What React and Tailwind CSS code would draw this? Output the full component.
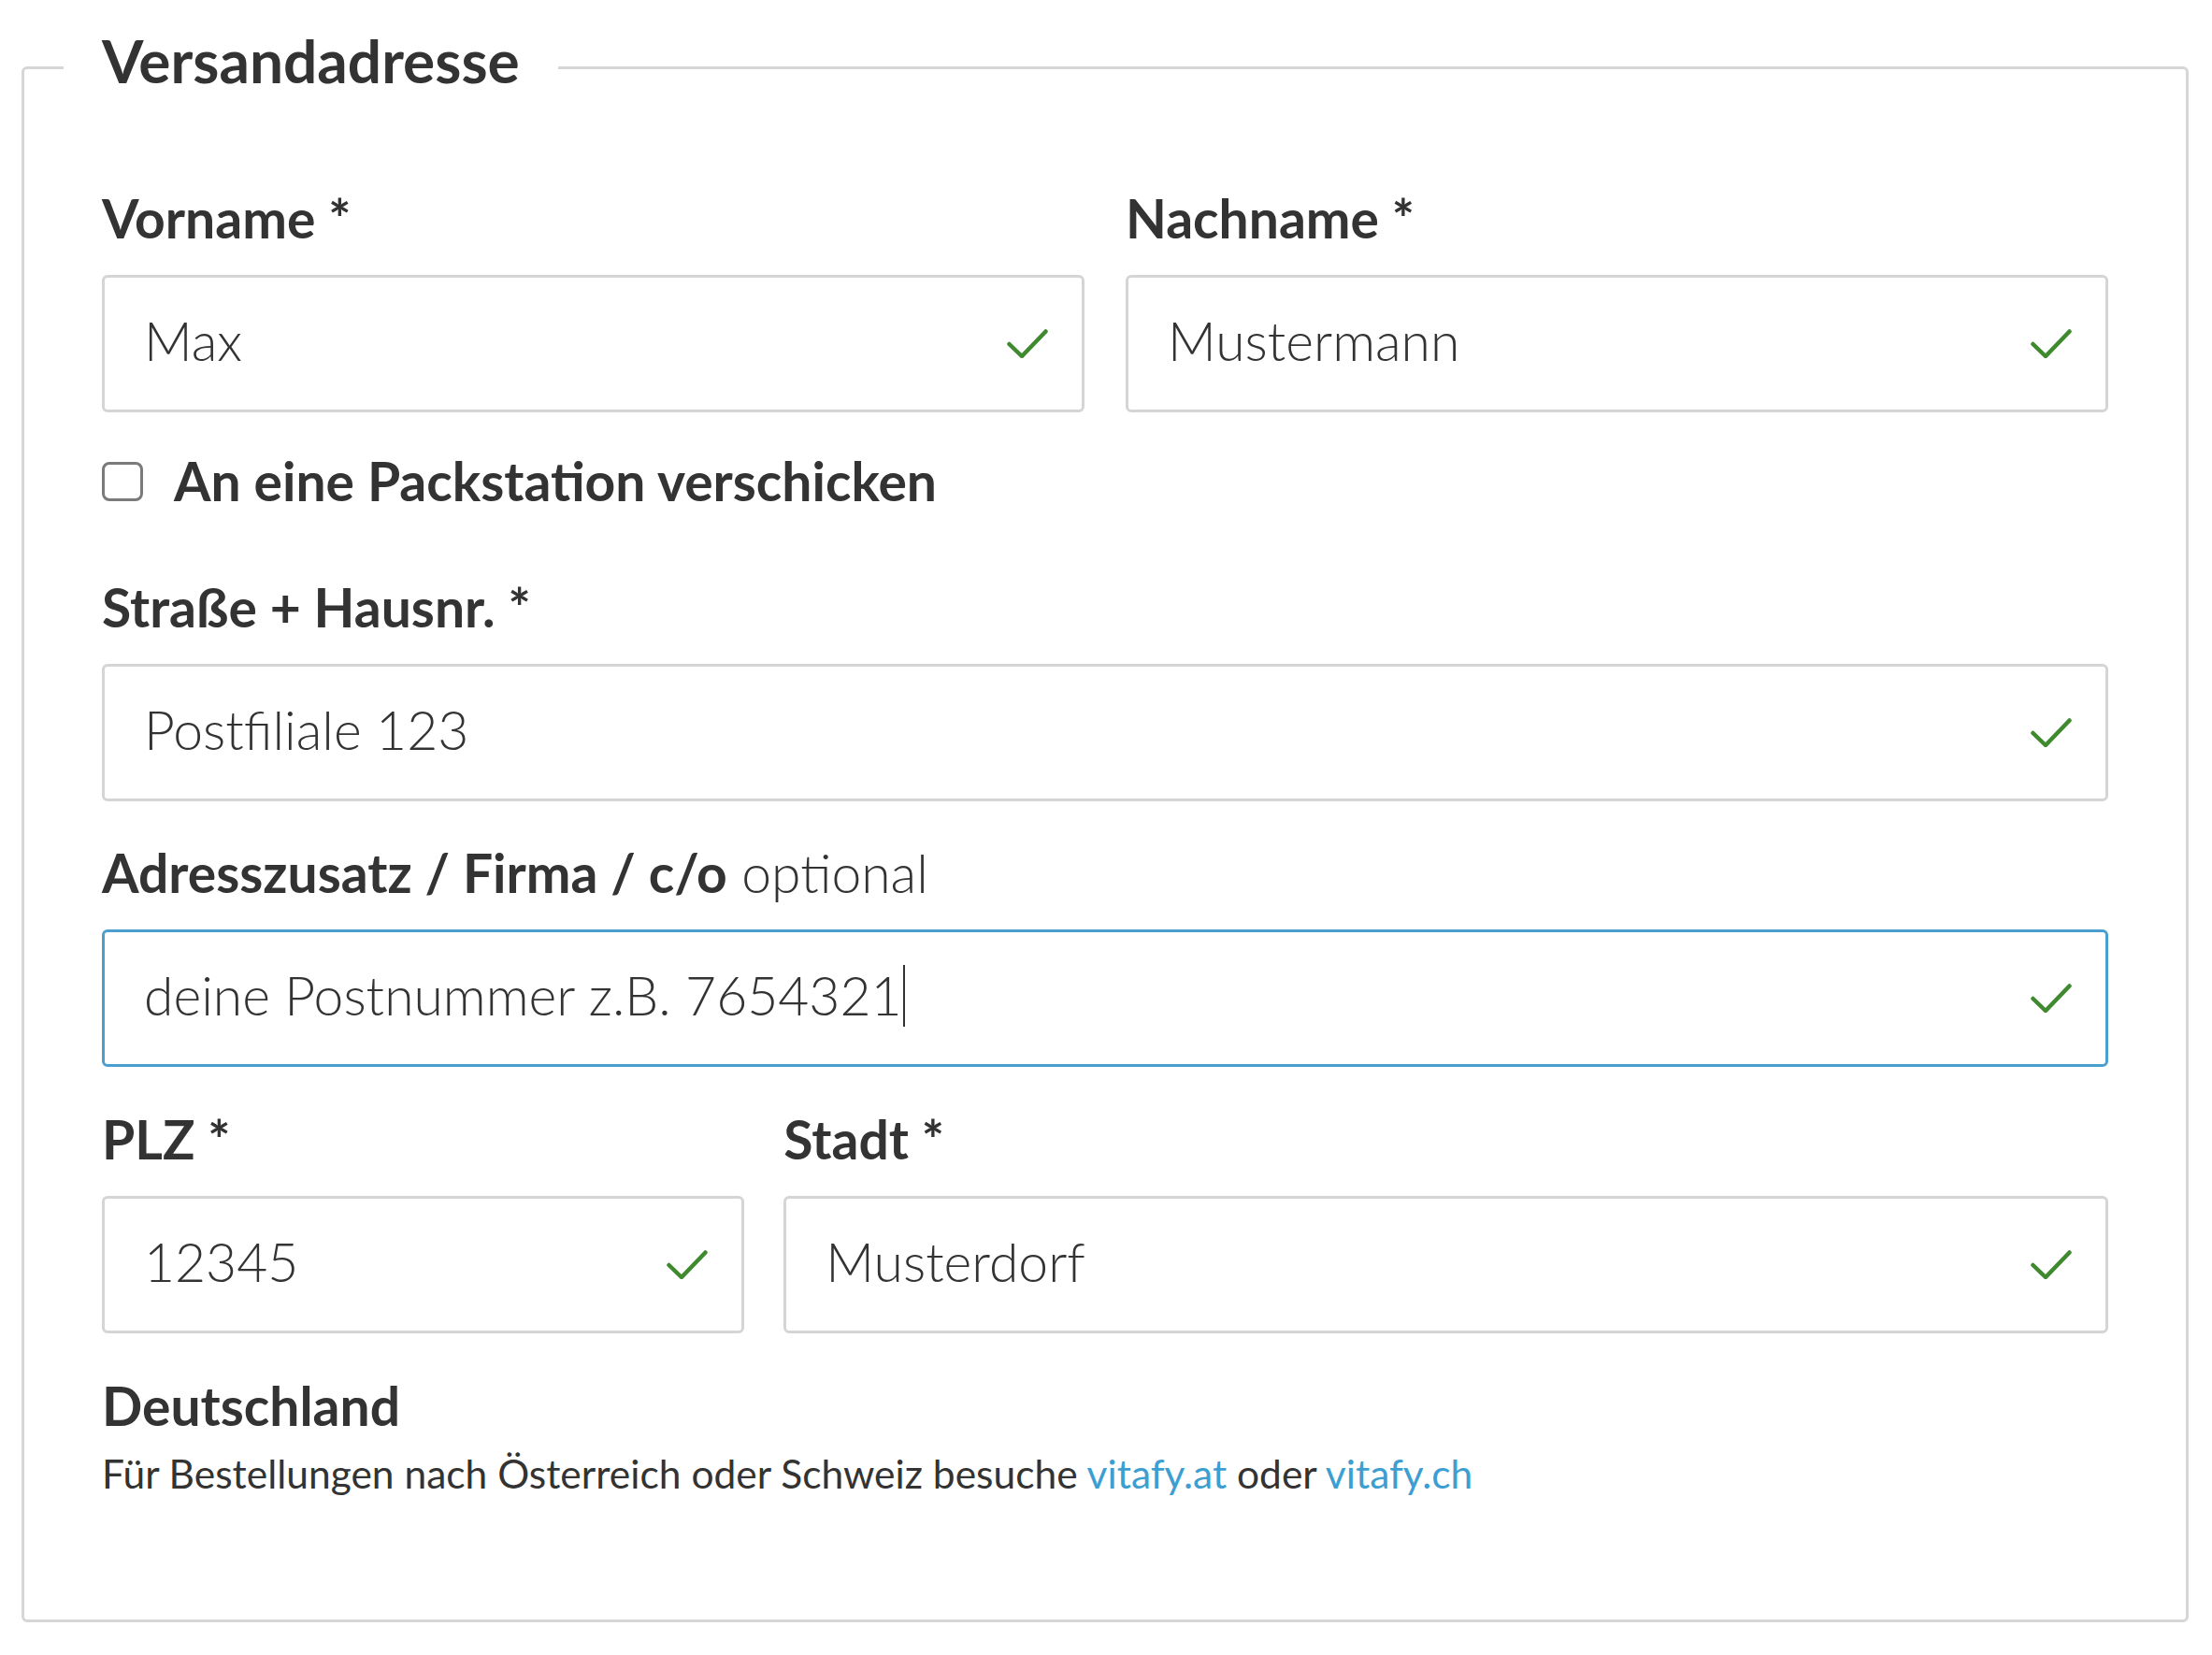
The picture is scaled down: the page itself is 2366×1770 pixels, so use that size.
import React from "react";

const Check = () => (
  <svg width="44" height="31" viewBox="0 0 44 31" fill="none" className="shrink-0">
    <path d="M2.5 16 L16 29 L41.5 2.5" stroke="#3f8a2f" strokeWidth="4.5" strokeLinecap="round" strokeLinejoin="round" />
  </svg>
);

const Field = ({ label, optional, value, focused, caret, className = "" }) => {
  return (
    <div className={`flex flex-col ${className}`}>
      <label className="text-[57px] leading-[68px] font-bold text-[#333] mb-[27px] whitespace-nowrap">
        {label}
        {optional && <span className="font-light"> optional</span>}
      </label>
      <div
        className={`h-[147px] flex items-center justify-between rounded-[6px] border-[3px] pl-[42px] pr-[36px] ${
          focused ? "border-[#4a9fcf]" : "border-[#d5d5d5]"
        }`}
      >
        <span className="flex items-center pb-[6px] text-[57px] font-light text-[#333]">
          {value}
          {caret && <span className="ml-[1px] w-[2px] h-[66px] bg-[#333]" />}
        </span>
        <Check />
      </div>
    </div>
  );
};

export default function App() {
  return (
    <div className="min-h-screen bg-white pt-[28px] pl-[23px] pr-[25px]" style={{ fontFamily: "Lato, 'Open Sans', sans-serif" }}>
      <fieldset className="border-[3px] border-[#d6d6d6] rounded-[6px] px-[83px] pt-[83px] pb-[132px]">
        <legend className="-ml-[41px] px-[41px] pb-[14px] text-[64px] leading-[74px] font-bold text-[#333]">
          Versandadresse
        </legend>

        <div className="flex flex-col">
          <div className="grid grid-cols-2 gap-x-[44px]">
            <Field label="Vorname *" value="Max" />
            <Field label="Nachname *" value="Mustermann" />
          </div>

          <label className="mt-[40px] h-[68px] flex items-center gap-[33px]">
            <span className="w-[44px] h-[42px] rounded-[8px] border-[3px] border-[#7a7a7a] bg-white" />
            <span className="text-[57px] font-bold text-[#333]">An eine Packstation verschicken</span>
          </label>

          <Field className="mt-[66px]" label="Straße + Hausnr. *" value="Postfiliale 123" />
          <Field className="mt-[42px]" label="Adresszusatz / Firma / c/o" optional value="deine Postnummer z.B. 7654321" focused caret />

          <div className="mt-[43px] grid grid-cols-3 gap-x-[42px]">
            <Field label="PLZ *" value="12345" />
            <Field className="col-span-2" label="Stadt *" value="Musterdorf" />
          </div>

          <p className="mt-[43px] text-[57px] leading-[68px] font-bold text-[#333]">Deutschland</p>
          <p className="mt-[15px] text-[42.5px] leading-[48px] font-normal text-[#333]">
            Für Bestellungen nach Österreich oder Schweiz besuche{" "}
            <a className="text-[#3d9fd1]">vitafy.at</a> oder <a className="text-[#3d9fd1]">vitafy.ch</a>
          </p>
        </div>
      </fieldset>
    </div>
  );
}
